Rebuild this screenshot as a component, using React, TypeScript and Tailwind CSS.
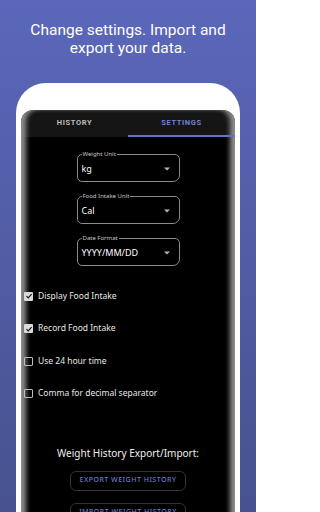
const fields = [
  { label: 'Weight Unit', value: 'kg' },
  { label: 'Food Intake Unit', value: 'Cal' },
  { label: 'Date Format', value: 'YYYY/MM/DD' },
];

const toggles = [
  { label: 'Display Food Intake', checked: true },
  { label: 'Record Food Intake', checked: true },
  { label: 'Use 24 hour time', checked: false },
  { label: 'Comma for decimal separator', checked: false },
];

function Caret() {
  return (
    <svg width="6" height="4" viewBox="0 0 6 4" className="shrink-0">
      <path d="M0 0.5h6L3 3.5z" fill="#b5b5b5" />
    </svg>
  );
}

function Check({ checked }: { checked: boolean }) {
  if (!checked) return <div className="w-[9px] h-[9px] rounded-[1px] border border-[#bdbdbd] shrink-0" />;
  return (
    <div className="w-[9px] h-[9px] rounded-[1px] bg-[#d9d9d9] flex items-center justify-center shrink-0">
      <svg width="8" height="8" viewBox="0 0 8 8">
        <path d="M1.5 4.2l1.7 1.7L6.6 2.2" fill="none" stroke="#1a1a1a" strokeWidth="1.2" />
      </svg>
    </div>
  );
}

export default function App() {
  return (
    <div className="w-[256px] h-[512px] overflow-hidden bg-[linear-gradient(#5b67ba,#47528f)] flex flex-col" style={{ fontFamily: 'Roboto, "Liberation Sans", sans-serif' }}>
      <h1 className="text-white text-center text-[15.5px] leading-[18px] pt-[21px] px-[10px]">
        Change settings. Import and<br />export your data.
      </h1>

      {/* phone */}
      <div className="mt-[26px] mx-[16px] flex-1 bg-white rounded-t-[30px] px-[5px] pt-[27px] flex flex-col">
        <div
          className="flex-1 rounded-t-[12px] bg-[linear-gradient(#151515_27px,#000_27px)] shadow-[inset_7px_0_5px_-2px_rgba(150,150,150,0.95),inset_-7px_0_5px_-2px_rgba(150,150,150,0.95)] flex flex-col"
          style={{ fontFamily: '"Noto Sans", "Open Sans", sans-serif' }}
        >
          {/* tabs */}
          <div className="flex h-[27px] text-[7.5px] font-bold tracking-[0.6px]" style={{ fontFamily: 'Roboto, sans-serif' }}>
            <div className="flex-1 flex items-center justify-center text-[#bdbdbd] pb-[1px]">HISTORY</div>
            <div className="flex-1 flex items-center justify-center text-[#7580d0] border-b-2 border-[#6671c4] pt-[1px]">SETTINGS</div>
          </div>

          {/* dropdowns */}
          <div className="flex flex-col items-center gap-[14px] pt-[17px]">
            {fields.map(f => (
              <div key={f.label} className="relative w-[103px] h-[28px] border border-[#8a8a8a] rounded-[5px] rounded-br-[7px] flex items-center pl-[4px] pr-[9px] pt-[2px]">
                <span className="absolute -top-[4px] left-[4px] bg-black px-[1px] text-[6px] leading-[7px] text-[#c8c8c8]">{f.label}</span>
                <span className="flex-1 text-[9px] text-white">{f.value}</span>
                <Caret />
              </div>
            ))}
          </div>

          {/* checkboxes */}
          <div className="flex flex-col gap-[20.5px] pl-[3px] pt-[24px]">
            {toggles.map(t => (
              <div key={t.label} className="flex items-center gap-[5px] h-[12px]">
                <Check checked={t.checked} />
                <span className="text-[8.5px] text-[#e6e6e6]">{t.label}</span>
              </div>
            ))}
          </div>

          {/* export / import */}
          <div className="flex flex-col items-center pt-[46px]">
            <div className="text-[10px] text-[#f0f0f0] leading-[14px]">Weight History Export/Import:</div>
            <div className="mt-[11px] w-[116px] h-[20px] border border-[#333] rounded-[6px] flex items-center justify-center text-[7px] tracking-[0.5px] text-[#6d77c4] font-medium">
              EXPORT WEIGHT HISTORY
            </div>
            <div className="mt-[12px] w-[116px] h-[20px] border border-[#333] rounded-[6px] flex items-center justify-center text-[7px] tracking-[0.5px] text-[#6d77c4] font-medium">
              IMPORT WEIGHT HISTORY
            </div>
          </div>
        </div>
      </div>
    </div>
  );
}
